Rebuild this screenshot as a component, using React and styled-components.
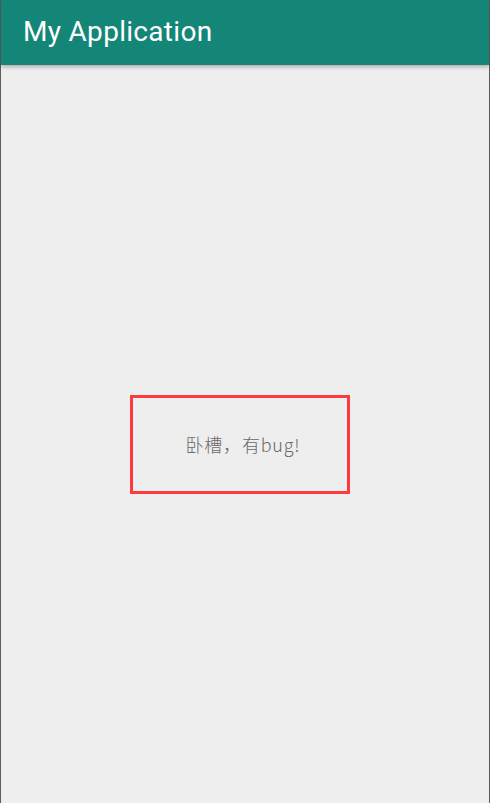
import React from "react";
import styled, { createGlobalStyle } from "styled-components";

const Global = createGlobalStyle`
  html, body { margin: 0; padding: 0; background: #eeeeee; }
  * { box-sizing: border-box; }
`;

const Screen = styled.div`
  width: 490px;
  height: 803px;
  display: flex;
  flex-direction: column;
  background: #eeeeee;
  border-left: 1px solid #5a5e5e;
  border-right: 1px solid #5a5e5e;
`;

const AppBar = styled.header`
  height: 65px;
  flex: none;
  display: flex;
  align-items: center;
  padding-left: 22px;
  background: #138677;
  box-shadow: 0 2px 4px rgba(0, 0, 0, 0.28);
  position: relative;
  z-index: 1;
`;

const Title = styled.h1`
  margin: 0;
  font-family: Roboto, "Noto Sans", sans-serif;
  font-weight: 400;
  font-size: 28px;
  color: #ffffff;
  letter-spacing: 0.3px;
  padding-bottom: 2px;
`;

const Content = styled.main`
  flex: 1;
  display: flex;
  align-items: center;
  justify-content: center;
  padding-top: 21px;
  padding-right: 10px;
`;

const BugBox = styled.div`
  width: 220px;
  height: 99px;
  border: 3px solid #fd3a3e;
  display: flex;
  align-items: center;
  justify-content: center;
`;

const Message = styled.span`
  font-family: "Noto Sans CJK SC", sans-serif;
  font-weight: 300;
  font-size: 18px;
  letter-spacing: 0.8px;
  color: #6a6a6a;
  padding-bottom: 2px;
  padding-left: 6px;
`;

export default function App() {
  return (
    <>
      <Global />
      <Screen>
        <AppBar>
          <Title>My Application</Title>
        </AppBar>
        <Content>
          <BugBox>
            <Message>卧槽，有bug!</Message>
          </BugBox>
        </Content>
      </Screen>
    </>
  );
}
